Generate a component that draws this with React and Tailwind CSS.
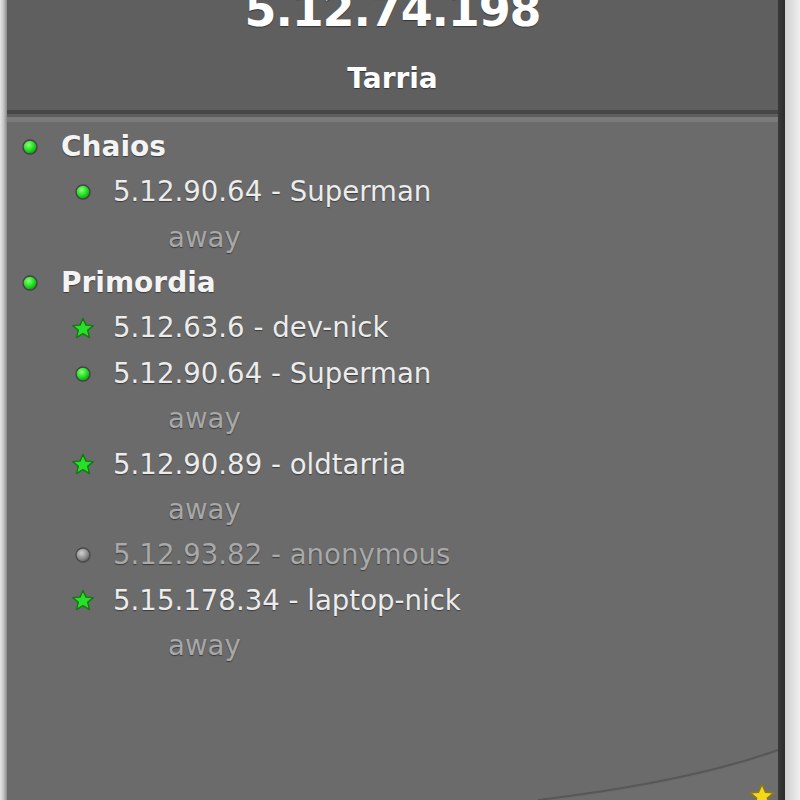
const groups = [
  {
    name: 'Chaios',
    members: [{ icon: 'dot', label: '5.12.90.64 - Superman', status: 'away' }],
  },
  {
    name: 'Primordia',
    members: [
      { icon: 'star', label: '5.12.63.6 - dev-nick' },
      { icon: 'dot', label: '5.12.90.64 - Superman', status: 'away' },
      { icon: 'star', label: '5.12.90.89 - oldtarria', status: 'away' },
      { icon: 'grey', label: '5.12.93.82 - anonymous', dim: true },
      { icon: 'star', label: '5.15.178.34 - laptop-nick', status: 'away' },
    ],
  },
];

function Dot({ grey }) {
  return (
    <svg width="18" height="18" viewBox="0 0 18 18">
      <defs>
        <radialGradient id={grey ? 'gg' : 'gd'} cx="40%" cy="35%" r="65%">
          <stop offset="0%" stopColor={grey ? '#cfcfcf' : '#8dff7a'} />
          <stop offset="60%" stopColor={grey ? '#929292' : '#1fe01f'} />
          <stop offset="100%" stopColor={grey ? '#5e5e5e' : '#10a010'} />
        </radialGradient>
      </defs>
      <circle cx="9" cy="9" r="7" fill={grey ? 'url(#gg)' : 'url(#gd)'} stroke={grey ? '#4a4a4a' : '#4a3f4a'} strokeWidth="1.4" />
    </svg>
  );
}

function Star({ color = '#27e027', stroke = '#137a13', size = 25 }) {
  return (
    <svg width={size} height={size} viewBox="0 0 20 20">
      <path
        d="M10 1.5 L12.5 7.2 L18.5 7.6 L13.9 11.5 L15.4 17.6 L10 14.3 L4.6 17.6 L6.1 11.5 L1.5 7.6 L7.5 7.2 Z"
        fill={color}
        stroke={stroke}
        strokeWidth="1.2"
        strokeLinejoin="round"
      />
    </svg>
  );
}

function Icon({ kind }) {
  if (kind === 'star') return <Star />;
  return <Dot grey={kind === 'grey'} />;
}

export default function App() {
  return (
    <div className="flex h-[800px] w-[800px] overflow-hidden bg-[#6b6b6b] font-['DejaVu_Sans',sans-serif] [text-shadow:0_1px_1px_rgba(0,0,0,0.45)]">
      <div className="w-[7px] shrink-0 bg-gradient-to-r from-[#e6e6e6] via-[#c4c4c4] to-[#8a8a8a]" />

      <div className="relative flex flex-1 flex-col">
        {/* header */}
        <div className="flex h-[110px] shrink-0 flex-col items-center bg-[#5f5f5f]">
          <div className="-mt-[13px] text-[46px] font-bold leading-none tracking-tight text-white">5.12.74.198</div>
          <div className="mt-[32px] text-[28px] font-bold leading-none text-white">Tarria</div>
        </div>
        <div className="h-[4px] shrink-0 bg-[#474747]" />
        <div className="h-[3px] shrink-0 bg-[#5e5e5e]" />
        <div className="h-[5px] shrink-0 bg-[#7a7a7a]" />

        {/* list */}
        <div className="flex flex-col pt-[2px]">
          {groups.map((g) => (
            <div key={g.name} className="flex flex-col">
              <div className="flex h-[45.4px] items-center gap-[22px] pl-[14px]">
                <Dot />
                <span className="text-[28px] font-bold leading-none text-[#f4f4f4]">{g.name}</span>
              </div>
              {g.members.map((m, i) => (
                <div key={i} className="flex flex-col">
                  <div className="flex h-[45.4px] items-center gap-[18px] pl-[64px]">
                    <div className="flex w-[24px] justify-center">
                      <Icon kind={m.icon} />
                    </div>
                    <span className={`text-[27.6px] leading-none ${m.dim ? 'text-[#a9a9a9]' : 'text-[#ececec]'}`}>{m.label}</span>
                  </div>
                  {m.status && (
                    <div className="flex h-[45.4px] items-center pl-[161px]">
                      <span className="text-[27.6px] leading-none text-[#a8a8a8]">{m.status}</span>
                    </div>
                  )}
                </div>
              ))}
            </div>
          ))}
        </div>

        {/* bottom curve + star */}
        <svg className="absolute bottom-0 right-0" width="240" height="60" viewBox="0 0 240 60">
          <path d="M0 62 Q150 44 240 12 L240 60 Z" fill="#6e6e6e" />
          <path d="M0 60 Q150 42 240 10" fill="none" stroke="#575757" strokeWidth="2" />
        </svg>
        <div className="absolute bottom-[-10px] right-[2px]">
          <Star color="#f5d81a" stroke="#8a7a20" size={28} />
        </div>
      </div>

      <div className="w-[7px] shrink-0 bg-gradient-to-r from-[#3a3a3a] to-[#2a2a2a]" />
      <div className="w-[15px] shrink-0 bg-gradient-to-r from-[#cfcfcf] to-[#efefef]" />
    </div>
  );
}
